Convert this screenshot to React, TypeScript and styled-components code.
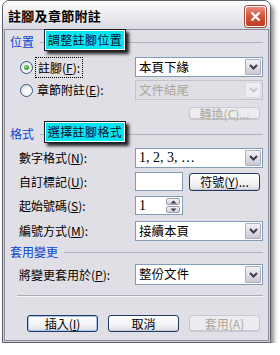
import React from "react";
import styled, { createGlobalStyle } from "styled-components";

const GlobalStyle = createGlobalStyle`
  html, body {
    margin: 0;
    padding: 0;
    background: #ffffff;
  }
  body {
    font-family: "Noto Sans CJK TC", "Noto Sans", sans-serif;
    font-size: 12px;
    color: #000;
  }
`;

const Window = styled.div`
  margin-left: 2px;
  width: 269px;
  height: 343px;
  box-sizing: border-box;
  border: 1px solid #5f5f6c;
  border-radius: 7px 7px 0 0;
  background: #cfcfd9;
  box-shadow: 3px 4px 4px rgba(0, 0, 0, 0.45);
  display: flex;
  flex-direction: column;
`;

const TitleBar = styled.div`
  height: 28px;
  flex: none;
  display: flex;
  align-items: center;
  justify-content: space-between;
  padding: 0 4px 0 5px;
  border-radius: 6px 6px 0 0;
  background: linear-gradient(to bottom, #ffffff 0%, #f1f1f4 35%, #d9d9e1 100%);
`;

const Title = styled.div`
  font-weight: 700;
  font-size: 13px;
  letter-spacing: 0.3px;
  line-height: 1;
  margin-top: 1px;
`;

const CloseButton = styled.div`
  width: 19px;
  height: 19px;
  margin-top: 2px;
  border: 1px solid #ffffff;
  border-radius: 3px;
  background: linear-gradient(to bottom, #e98d7c 0%, #d5563f 45%, #c03a22 100%);
  box-shadow: 0 0 0 1px #a24b3e;
  display: flex;
  align-items: center;
  justify-content: center;
`;

const Body = styled.div`
  flex: 1;
  margin: 0 1px 1px 1px;
  border: 1px solid #8f8f9c;
  background: #e0dfe6;
  padding: 5px 4px 0 5px;
  display: flex;
  flex-direction: column;
`;

const HeadingRow = styled.div<{ $top: number }>`
  position: relative;
  height: 14px;
  margin-top: ${({ $top }) => $top}px;
  display: flex;
  align-items: center;
  gap: 6px;
`;

const Heading = styled.span`
  color: #0b47cf;
  font-size: 12px;
  line-height: 1;
`;

const Rule = styled.div`
  flex: 1;
  height: 1px;
  background: #b1b0bd;
  margin-right: 1px;
`;

const Callout = styled.div`
  position: absolute;
  left: 35px;
  top: -5px;
  width: 78px;
  height: 18px;
  border: 1px solid #ffffff;
  background: #05e6f2;
  box-shadow: 0 0 0 1px #1a1a2a, 3px 3px 3px 1px rgba(0, 0, 0, 0.85);
  color: #0c0c2c;
  font-size: 12px;
  line-height: 18px;
  text-align: center;
  letter-spacing: 0.4px;
`;

const Row = styled.div<{ $top: number; $h: number }>`
  display: grid;
  grid-template-columns: 116px 128px;
  align-items: center;
  height: ${({ $h }) => $h}px;
  margin-top: ${({ $top }) => $top}px;
  padding-left: 9px;
`;

const Label = styled.span<{ $disabled?: boolean }>`
  color: ${({ $disabled }) => ($disabled ? "#aca899" : "#000")};
  white-space: nowrap;
  line-height: 1;
`;

const RadioLabel = styled.label`
  display: flex;
  align-items: center;
  gap: 4px;
  margin-left: 1px;
`;

const Radio = styled.span<{ $checked?: boolean }>`
  width: 11px;
  height: 11px;
  border-radius: 50%;
  border: 1px solid #305b84;
  background: radial-gradient(circle at 60% 65%, #ffffff 0%, #f4f4f6 40%, #d2d2da 100%);
  display: flex;
  align-items: center;
  justify-content: center;

  &::after {
    content: "";
    display: ${({ $checked }) => ($checked ? "block" : "none")};
    width: 5px;
    height: 5px;
    border-radius: 50%;
    background: radial-gradient(circle at 40% 35%, #8be38b 0%, #2aa52a 60%, #1b7d1b 100%);
  }
`;

const Focus = styled.span`
  outline: 1px dotted #000;
  outline-offset: 1px;
  padding: 0 1px;
`;

const Select = styled.div<{ $disabled?: boolean }>`
  height: 100%;
  box-sizing: border-box;
  border: 1px solid ${({ $disabled }) => ($disabled ? "#c5c3cc" : "#7f9db9")};
  background: ${({ $disabled }) => ($disabled ? "#e0dfe6" : "#ffffff")};
  color: ${({ $disabled }) => ($disabled ? "#aca899" : "#000")};
  display: flex;
  align-items: center;
  justify-content: space-between;
  padding: 1px 1px 1px 3px;
`;

const Value = styled.span<{ $serif?: boolean }>`
  font-size: ${({ $serif }) => ($serif ? "14px" : "12.5px")};
  font-family: ${({ $serif }) =>
    $serif ? '"Liberation Serif", "Noto Sans CJK TC", serif' : "inherit"};
  line-height: 1;
`;

const ArrowButton = styled.span<{ $disabled?: boolean }>`
  width: 16px;
  height: 100%;
  box-sizing: border-box;
  border: 1px solid ${({ $disabled }) => ($disabled ? "#dcdbe2" : "#aeaec2")};
  border-radius: 1px;
  background: ${({ $disabled }) =>
    $disabled
      ? "#eeedf2"
      : "linear-gradient(to bottom, #f2f2f6 0%, #dcdce6 55%, #c8c8d6 100%)"};
  display: flex;
  align-items: center;
  justify-content: center;
`;

const Controls = styled.div`
  display: flex;
  align-items: center;
  height: 100%;
  gap: 6px;
`;

const Input = styled.div`
  width: 48px;
  height: 100%;
  box-sizing: border-box;
  border: 1px solid #7f9db9;
  background: #fff;
  display: flex;
  align-items: center;
  justify-content: space-between;
  padding: 1px 2px 1px 3px;
`;

const Spin = styled.div`
  display: flex;
  flex-direction: column;
  gap: 1px;
`;

const SpinButton = styled.span`
  width: 14px;
  height: 7px;
  box-sizing: border-box;
  border: 1px solid #9b9bb0;
  border-radius: 2px;
  background: linear-gradient(to bottom, #f4f4f8, #cfcfdc);
  display: flex;
  align-items: center;
  justify-content: center;
`;

const ButtonBar = styled.div<{ $top: number; $pad: number }>`
  display: flex;
  gap: 10px;
  margin-top: ${({ $top }) => $top}px;
  padding-left: ${({ $pad }) => $pad}px;
`;

const Button = styled.div<{ $h: number; $disabled?: boolean; $default?: boolean }>`
  width: 71px;
  height: ${({ $h }) => $h}px;
  box-sizing: border-box;
  border: 1px solid ${({ $disabled }) => ($disabled ? "#c9c8d0" : "#1f3a63")};
  border-radius: 3px;
  background: ${({ $disabled }) =>
    $disabled
      ? "#ecebf0"
      : "linear-gradient(to bottom, #ffffff 0%, #f3f3f6 60%, #dcdce4 100%)"};
  box-shadow: ${({ $default }) =>
    $default ? "inset 0 0 0 1px #a9c1ec, inset 0 -1px 0 #8fa6d8" : "inset 0 -1px 0 #c8c8d4"};
  color: ${({ $disabled }) => ($disabled ? "#aca899" : "#000")};
  display: flex;
  align-items: center;
  justify-content: center;
  line-height: 1;
  white-space: nowrap;
`;

const Separator = styled.div`
  height: 1px;
  margin: 10px 1px 0 7px;
  background: #acabb7;
  border-bottom: 1px solid #f6f6f8;
`;

const Chevron = ({ disabled }: { disabled?: boolean }) => (
  <svg width="9" height="6" viewBox="0 0 9 6">
    <path
      d="M1 1 L4.5 4.5 L8 1"
      fill="none"
      stroke={disabled ? "#c9c8d0" : "#3b3b4a"}
      strokeWidth="2"
    />
  </svg>
);

const Triangle = ({ up }: { up?: boolean }) => (
  <svg width="7" height="4" viewBox="0 0 7 4">
    <path d={up ? "M0.5 3.5 L3.5 0.5 L6.5 3.5 Z" : "M0.5 0.5 L3.5 3.5 L6.5 0.5 Z"} fill="#3b3b4a" />
  </svg>
);

const Dropdown = ({
  value,
  disabled,
  serif,
}: {
  value: string;
  disabled?: boolean;
  serif?: boolean;
}) => (
  <Select $disabled={disabled}>
    <Value $serif={serif}>{value}</Value>
    <ArrowButton $disabled={disabled}>
      <Chevron disabled={disabled} />
    </ArrowButton>
  </Select>
);

export default function App() {
  return (
    <>
      <GlobalStyle />
      <Window>
        <TitleBar>
          <Title>註腳及章節附註</Title>
          <CloseButton>
            <svg width="11" height="11" viewBox="0 0 11 11">
              <path d="M1.5 1.5 L9.5 9.5 M9.5 1.5 L1.5 9.5" stroke="#fff" strokeWidth="2.4" />
            </svg>
          </CloseButton>
        </TitleBar>
        <Body>
          <HeadingRow $top={0}>
            <Heading>位置</Heading>
            <Rule />
            <Callout>調整註腳位置</Callout>
          </HeadingRow>

          <Row $top={8} $h={20}>
            <RadioLabel>
              <Radio $checked />
              <Focus>
                註腳(<u>F</u>):
              </Focus>
            </RadioLabel>
            <Dropdown value="本頁下緣" />
          </Row>
          <Row $top={3} $h={20}>
            <RadioLabel>
              <Radio />
              <Label>
                章節附註(<u>E</u>):
              </Label>
            </RadioLabel>
            <Dropdown value="文件結尾" disabled />
          </Row>
          <Row $top={7} $h={13}>
            <span />
            <Controls>
              <span style={{ width: 48 }} />
              <Button $h={13} $disabled>
                轉換(C)...
              </Button>
            </Controls>
          </Row>

          <HeadingRow $top={7}>
            <Heading>格式</Heading>
            <Rule />
            <Callout>選擇註腳格式</Callout>
          </HeadingRow>

          <Row $top={7} $h={20}>
            <Label>
              數字格式(<u>N</u>):
            </Label>
            <Dropdown value="1, 2, 3, …" serif />
          </Row>
          <Row $top={4} $h={19}>
            <Label>
              自訂標記(<u>U</u>):
            </Label>
            <Controls>
              <Input />
              <Button $h={18}>
                符號(<u>Y</u>)...
              </Button>
            </Controls>
          </Row>
          <Row $top={5} $h={19}>
            <Label>
              起始號碼(<u>S</u>):
            </Label>
            <Controls>
              <Input>
                <Value $serif>1</Value>
                <Spin>
                  <SpinButton>
                    <Triangle up />
                  </SpinButton>
                  <SpinButton>
                    <Triangle />
                  </SpinButton>
                </Spin>
              </Input>
            </Controls>
          </Row>
          <Row $top={6} $h={20}>
            <Label>
              編號方式(<u>M</u>):
            </Label>
            <Dropdown value="接續本頁" />
          </Row>

          <HeadingRow $top={4}>
            <Heading>套用變更</Heading>
            <Rule />
          </HeadingRow>

          <Row $top={5} $h={21}>
            <Label>
              將變更套用於(<u>P</u>):
            </Label>
            <Dropdown value="整份文件" />
          </Row>

          <Separator />

          <ButtonBar $top={18} $pad={17}>
            <Button $h={17} $default>
              插入(<u>I</u>)
            </Button>
            <Button $h={17}>取消</Button>
            <Button $h={17} $disabled>
              套用(A)
            </Button>
          </ButtonBar>
        </Body>
      </Window>
    </>
  );
}
